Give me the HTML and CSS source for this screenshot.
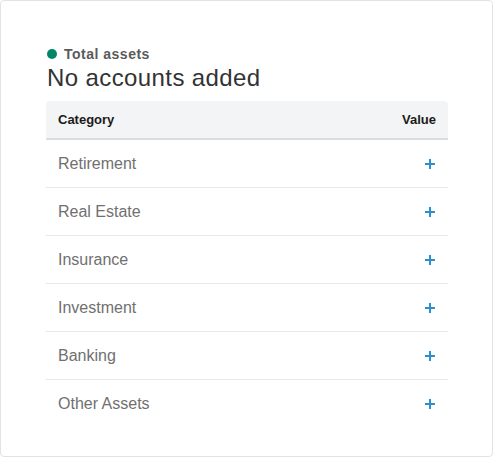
FILE: index.html
```html
<!DOCTYPE html>
<html>
<head>
<meta charset="utf-8">
<link rel="stylesheet" href="styles.css">
</head>
<body>
<div class="card">
  <div class="label"><span class="dot"></span><span>Total assets</span></div>
  <div class="title">No accounts added</div>
  <div class="table">
    <div class="head"><span>Category</span><span>Value</span></div>
    <div class="row"><span>Retirement</span><svg class="plus" viewBox="0 0 10 10"><path d="M5 0V10M0 5H10"/></svg></div>
    <div class="row"><span>Real Estate</span><svg class="plus" viewBox="0 0 10 10"><path d="M5 0V10M0 5H10"/></svg></div>
    <div class="row"><span>Insurance</span><svg class="plus" viewBox="0 0 10 10"><path d="M5 0V10M0 5H10"/></svg></div>
    <div class="row"><span>Investment</span><svg class="plus" viewBox="0 0 10 10"><path d="M5 0V10M0 5H10"/></svg></div>
    <div class="row"><span>Banking</span><svg class="plus" viewBox="0 0 10 10"><path d="M5 0V10M0 5H10"/></svg></div>
    <div class="row last"><span>Other Assets</span><svg class="plus" viewBox="0 0 10 10"><path d="M5 0V10M0 5H10"/></svg></div>
  </div>
</div>
</body>
</html>
```
FILE: styles.css
```css
html, body { margin: 0; padding: 0; background: #fff; }
body { font-family: "Liberation Sans", Arial, sans-serif; }
.card {
  box-sizing: border-box;
  width: 493px;
  height: 457px;
  border: 1px solid #e3e3e3;
  border-radius: 4px;
  padding: 45px 45px 0 45px;
  background: #fff;
}
.label {
  display: flex;
  align-items: center;
  gap: 7px;
  font-size: 14px;
  letter-spacing: 0.5px;
  font-weight: bold;
  color: #5a5a5a;
  height: 16px;
  margin-left: 1px;
}
.dot {
  width: 10px;
  height: 10px;
  border-radius: 50%;
  background: #00876a;
}
.title {
  font-size: 24px;
  letter-spacing: 0.4px;
  color: #333;
  line-height: 28px;
  margin-top: 2px;
  margin-left: 1px;
}
.table { margin-top: 9px; width: 402px; }
.head {
  display: flex;
  justify-content: space-between;
  align-items: center;
  height: 37px;
  padding: 0 12px;
  background: #f3f4f5;
  border-radius: 4px 4px 0 0;
  border-bottom: 2px solid #dcdddf;
  font-size: 13px;
  font-weight: bold;
  color: #1a1a1a;
}
.row {
  display: flex;
  justify-content: space-between;
  align-items: center;
  height: 47px;
  padding: 0 12px;
  border-bottom: 1px solid #e8e8e8;
  font-size: 16px;
  color: #707070;
}
.row.last { border-bottom: none; }
.plus {
  width: 10px;
  height: 10px;
  margin-right: 1px;
  stroke: #2d8fcb;
  stroke-width: 2;
  fill: none;
}
```
